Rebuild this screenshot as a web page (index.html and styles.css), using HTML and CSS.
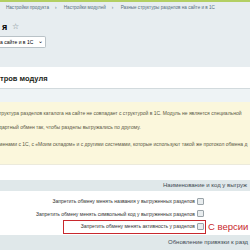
FILE: index.html
```html
<!DOCTYPE html>
<html lang="ru">
<head>
  <meta charset="UTF-8">
  <title>Настройки модуля</title>
  <link rel="stylesheet" href="styles.css">
</head>
<body>
<div class="topline"></div>
<div class="head">
  <div class="crumbs">
    <span>Настройки продукта</span><span class="sep">›</span>
    <span>Настройки модулей</span><span class="sep">›</span>
    <span>Разные структуры разделов на сайте и в 1С</span>
  </div>
  <div class="title"><span class="title-text">я</span><span class="star">☆</span></div>
  <div class="select"><span>а сайте и в 1С</span><span class="chev">⌄</span></div>
</div>
<div class="tab">тров модуля</div>
<div class="strip"></div>
<div class="notice">
  <p>труктура разделов каталога на сайте не совпадает с структурой в 1С. Модуль не является специальной</p>
  <p>дартный обмен так, чтобы разделы выгружались по другому.</p>
  <p class="last">менами с 1С, с «Моим складом» и с другими системами, которые используют такой же протокол обмена д</p>
</div>
<div class="gap"></div>
<div class="group">Наименование и код у выгруж</div>
<div class="rows">
  <div class="row">
    <label>Запретить обмену менять названия у выгруженных разделов</label>
    <span class="box"></span>
  </div>
  <div class="row">
    <label>Запретить обмену менять символьный код у выгруженных разделов</label>
    <span class="box"></span>
  </div>
  <div class="row marked">
    <label>Запретить обмену менять активность у разделов</label>
    <span class="box"></span>
    <span class="since">С версии</span>
  </div>
</div>
<div class="group group2">Обновление привязки к разд</div>
</body>
</html>
```

FILE: styles.css
```css
body{
  margin:0;
  width:250px;
  height:250px;
  overflow:hidden;
  background:#e7edf0;
  font-family:"Liberation Sans", Arial, sans-serif;
}
.topline{
  height:2px;
  background:#b3cf63;
}
.head{
  height:65px;
  overflow:hidden;
}
.crumbs{
  padding:3px 0 0 6px;
  font-size:4.6px;
  color:#55707d;
  white-space:nowrap;
  height:9px;
}
.crumbs .sep{
  margin:0 6px;
}
.title{
  display:flex;
  align-items:center;
  gap:5px;
  padding:8px 0 0 2px;
  height:9px;
}
.title-text{
  font-size:9px;
  font-weight:bold;
}
.star{
  font-size:8px;
  color:#6d7a82;
}
.select{
  margin-top:5px;
  width:43px;
  height:10px;
  display:flex;
  align-items:center;
  justify-content:space-between;
  background:#fff;
  border:1px solid #b9c2c7;
  border-left:none;
  border-radius:0 2px 2px 0;
  font-size:5px;
  white-space:nowrap;
  padding-right:2px;
  box-sizing:content-box;
}
.select .chev{
  font-size:6px;
  line-height:4px;
  margin-top:-2px;
}
.tab{
  height:21px;
  background:#fff;
  font-size:7.5px;
  font-weight:bold;
  line-height:23px;
  color:#1d1f20;
  border-bottom:1px solid #d2dadd;
}
.strip{
  height:13px;
  background:#eef3f5;
}
.notice{
  height:62px;
  background:#fbf7dc;
  padding-top:8px;
  box-sizing:border-box;
  font-size:5px;
  color:#5a5744;
  white-space:nowrap;
  overflow:hidden;
}
.notice p{
  margin:0 0 8px -1px;
  line-height:6px;
}
.notice .last{
  margin-top:11px;
}
.gap{
  height:15px;
  background:#fff;
  border-top:1px solid #eceadb;
}
.group{
  height:11px;
  background:#e0e8ea;
  padding-left:163px;
  font-size:6px;
  line-height:11px;
  color:#3e4a52;
  white-space:nowrap;
  overflow:hidden;
}
.rows{
  background:#fff;
  padding:4px 0 2px;
}
.row{
  display:grid;
  grid-template-columns:197px 8px auto;
  align-items:center;
  height:12.5px;
  font-size:5px;
  color:#333;
  white-space:nowrap;
}
.row label{
  text-align:right;
  padding-right:2px;
}
.box{
  width:5px;
  height:5px;
  border:1px solid #9aa3a8;
  border-radius:1px;
  background:#e9edef;
}
.marked{
  position:relative;
}
.marked::before{
  content:"";
  position:absolute;
  left:63px;
  top:0;
  width:141px;
  height:12px;
  border:1px solid #c8282d;
}
.since{
  font-size:9.5px;
  color:#c8282d;
  padding-left:3px;
}
.group2{
  height:17px;
  line-height:15px;
  padding-left:168px;
}
```
